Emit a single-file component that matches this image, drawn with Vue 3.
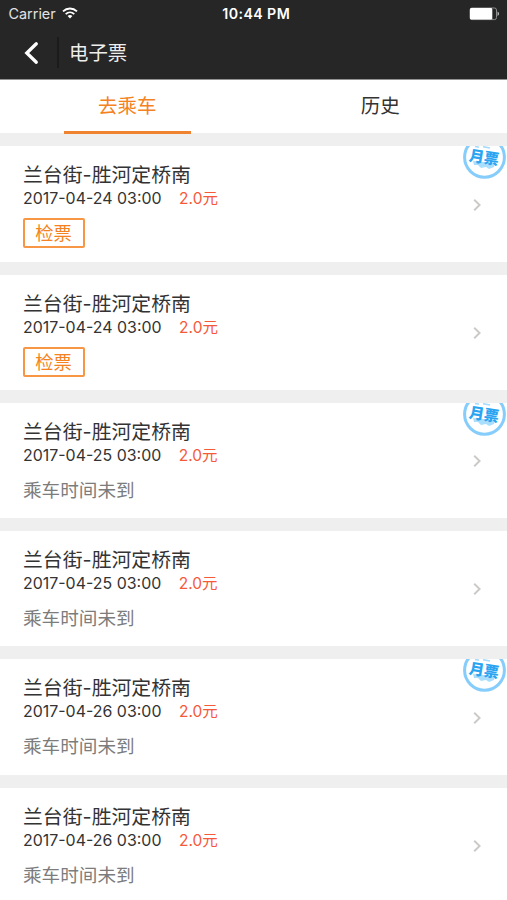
<script setup>
const tickets = [
  { date: '2017-04-24 03:00', ready: true, monthly: true },
  { date: '2017-04-24 03:00', ready: true, monthly: false },
  { date: '2017-04-25 03:00', ready: false, monthly: true },
  { date: '2017-04-25 03:00', ready: false, monthly: false },
  { date: '2017-04-26 03:00', ready: false, monthly: true },
  { date: '2017-04-26 03:00', ready: false, monthly: false },
]
</script>

<template>
  <div class="screen">
    <header class="top">
      <div class="status">
        <div class="carrier">
          <span>Carrier</span>
          <svg class="wifi" viewBox="0 0 16 12" width="16" height="12" fill="none" stroke="#fff" stroke-width="1.8">
            <path d="M1 4.4C5 .5 11 .5 15 4.4" />
            <path d="M3.7 7.1C6.2 4.8 9.8 4.8 12.3 7.1" />
            <path d="M8 11.4 5.6 9C7 7.8 9 7.8 10.4 9Z" fill="#fff" stroke="none" />
          </svg>
        </div>
        <div class="clock">10:44 PM</div>
        <div class="power">
          <svg viewBox="0 0 31 14" width="31" height="14">
            <rect x="1" y="1" width="26.5" height="11.6" rx="2" fill="none" stroke="#8d8d8d" stroke-width="1" />
            <rect x="1" y="1" width="22.3" height="11.6" rx="1.4" fill="#fff" />
            <path d="M28.6 4.6c1.7.8 1.7 3.6 0 4.4z" fill="#ddd" />
          </svg>
        </div>
      </div>
      <div class="nav">
        <svg class="back" viewBox="0 0 16 24" width="16" height="24">
          <path d="M13.3 2.8 3.8 12l9.5 9.2" fill="none" stroke="#fff" stroke-width="3.3" stroke-linecap="round" stroke-linejoin="miter" />
        </svg>
        <span class="divider"></span>
        <h1>电子票</h1>
      </div>
    </header>

    <nav class="tabs">
      <div class="tab active"><span>去乘车</span></div>
      <div class="tab"><span>历史</span></div>
    </nav>

    <main class="list">
      <article v-for="(t, i) in tickets" :key="i" class="card">
        <div class="info">
          <h2>兰台街-胜河定桥南</h2>
          <p class="meta"><span class="date">{{ t.date }}</span><span class="price">2.0元</span></p>
          <button v-if="t.ready" class="check">检票</button>
          <p v-else class="wait">乘车时间未到</p>
        </div>
        <svg class="arrow" viewBox="0 0 10 14" width="10" height="14">
          <path d="M2.2 1.8 7.6 7 2.2 12.2" fill="none" stroke="#cbc9c8" stroke-width="1.9" />
        </svg>
        <svg v-if="t.monthly" class="stamp" viewBox="0 0 46 34" width="46" height="34">
          <circle cx="23.5" cy="11.3" r="19.9" fill="#fff" stroke="#86cdfb" stroke-width="3" />
          <path d="M14 .4l4 .8M22 .6l7 1.4" stroke="#a5dcfd" stroke-width="1.6" />
          <path d="M12 15l1 4 4 0 3 3 5-1 3 2 5-2 1-4z" fill="#a9dffd" />
          <text class="stamp-text" x="23" y="16.8" text-anchor="middle" transform="rotate(9 23 12)">月票</text>
        </svg>
      </article>
    </main>
  </div>
</template>

<style>
body {
  margin: 0;
  background: #efefef;
}
</style>

<style scoped>
.screen {
  width: 507px;
  height: 900px;
  overflow: hidden;
  background: #efefef;
  color: #333;
  font-family: Inter, "Noto Sans CJK SC", sans-serif;
}
h1, h2, p {
  margin: 0;
  font-weight: 400;
}
.top {
  box-sizing: border-box;
  height: 79.5px;
  background: linear-gradient(#262626 79px, #929292 79px);
  color: #fff;
}
.status {
  display: grid;
  grid-template-columns: 1fr auto 1fr;
  height: 27px;
  padding: 0 7px 0 8.5px;
  align-items: center;
}
.carrier {
  display: flex;
  align-items: center;
  gap: 6px;
  font-size: 14.4px;
  color: #e2e2e2;
}
.wifi {
  margin-top: -2px;
}
.clock {
  position: relative;
  left: 2px;
  font-size: 14.2px;
  font-weight: 600;
  letter-spacing: .4px;
}
.power {
  display: flex;
  justify-content: flex-end;
}
.nav {
  display: flex;
  align-items: center;
  height: 51px;
  padding-left: 23px;
}
.divider {
  width: 2px;
  height: 31px;
  margin: 0 10px 0 18px;
  background: #1b1b1b;
}
h1 {
  font-size: 19.4px;
  line-height: 30px;
  color: #eee;
}
.tabs {
  display: grid;
  grid-template-columns: 1fr 1fr;
  height: 54.5px;
  background: linear-gradient(#fff 53.5px, #efefef 53.5px);
}
.tab {
  display: flex;
  justify-content: center;
  padding-left: 1px;
  font-size: 19.5px;
  line-height: 53.5px;
}
.tab + .tab {
  padding-left: 0;
}
.tab span {
  box-sizing: border-box;
  width: 127px;
  height: 54.5px;
  text-align: center;
}
.active span {
  color: #f58220;
  border-bottom: 3px solid #f08330;
}
.list {
  display: flex;
  flex-direction: column;
  gap: 13px;
  padding-top: 12.3px;
}
.card {
  position: relative;
  box-sizing: border-box;
  display: flex;
  justify-content: space-between;
  height: 115.3px;
  flex: none;
  padding: 16px 25px 0 23px;
  background: #fff;
}
h2 {
  font-size: 19.85px;
  line-height: 27px;
}
.meta {
  display: flex;
  gap: 17.5px;
  font-size: 15.95px;
  line-height: 20px;
}
.price {
  color: #f6583a;
  font-size: 15.5px;
}
.check {
  display: block;
  box-sizing: border-box;
  width: 62px;
  height: 30px;
  margin: 9px 0 0 -.4px;
  padding: 0;
  border: 2px solid #f79645;
  border-radius: 2px;
  background: #fff;
  color: #f58220;
  font-family: inherit;
  font-size: 18.3px;
  line-height: 27px;
}
.wait {
  margin-top: 11px;
  font-size: 18.6px;
  line-height: 27px;
  color: #7c7c7c;
}
.arrow {
  margin-top: 35.3px;
}
.stamp {
  position: absolute;
  top: 0;
  right: 0;
}
.stamp-text {
  font-size: 15px;
  font-weight: 900;
  fill: #2ba4f1;
}
</style>
